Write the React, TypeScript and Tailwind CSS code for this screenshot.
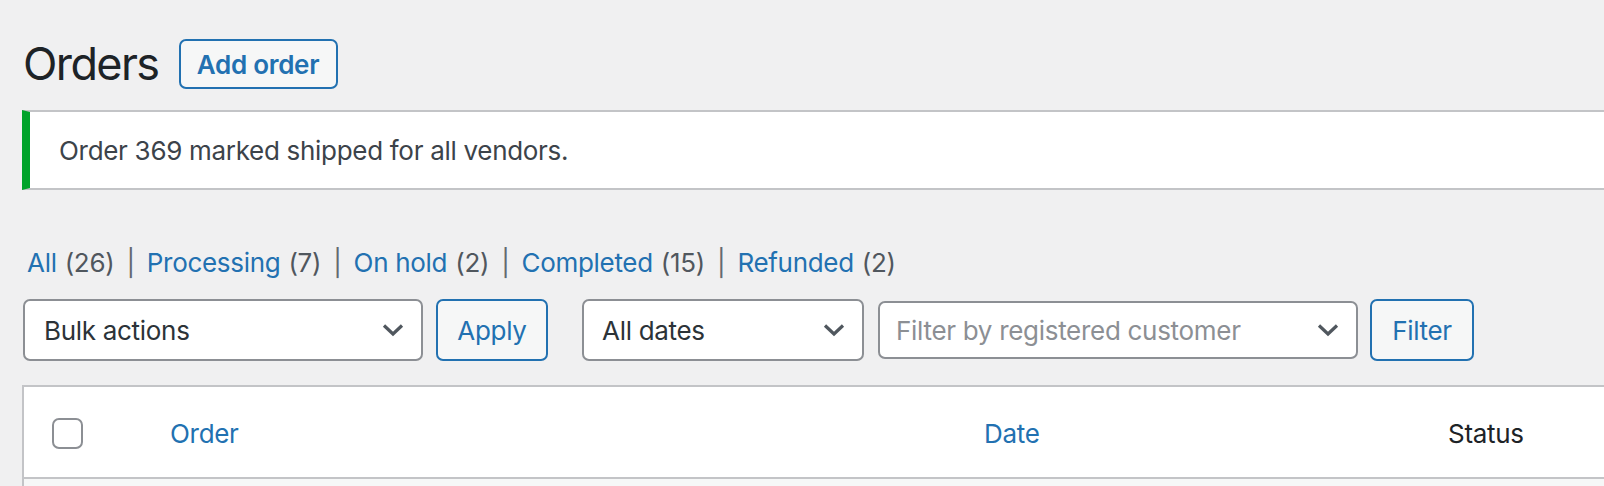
import { ReactNode } from 'react';

function Chevron() {
  return (
    <svg width="22" height="14" viewBox="0 0 22 14" className="shrink-0">
      <path d="M2 2.5 L11 11 L20 2.5" stroke="#50575e" strokeWidth="3.2" fill="none" />
    </svg>
  );
}

function Select({ className, children, muted }: { className: string; children: ReactNode; muted?: boolean }) {
  return (
    <div
      className={`flex items-center justify-between bg-white border-2 border-[#8c8f94] rounded-[7px] pr-[17px] ${className} ${
        muted ? 'text-[#8c8f94]' : 'text-[#2c3338]'
      }`}
    >
      <span>{children}</span>
      <Chevron />
    </div>
  );
}

function SecondaryButton({ className, children }: { className: string; children: ReactNode }) {
  return (
    <button className={`flex items-center justify-center bg-[#f6f7f7] border-2 border-[#2271b1] rounded-[7px] text-[#2271b1] ${className}`}>
      {children}
    </button>
  );
}

const views = [
  { label: 'All', count: 26 },
  { label: 'Processing', count: 7 },
  { label: 'On hold', count: 2 },
  { label: 'Completed', count: 15 },
  { label: 'Refunded', count: 2 },
];

export default function App() {
  return (
    <div className="min-h-screen bg-[#f0f0f1] pl-[22px] font-['Inter',sans-serif] text-[26px] tracking-[-0.3px] text-[#3c434a] overflow-hidden">
      {/* heading */}
      <div className="flex items-center gap-[20px] pt-[39px]">
        <h1 className="text-[45px] leading-[50px] tracking-[-1.6px] text-[#1d2327] font-normal pl-[1px]">Orders</h1>
        <SecondaryButton className="h-[50px] w-[159px] font-semibold text-[26px]">Add order</SecondaryButton>
      </div>

      {/* notice */}
      <div className="mt-[21px] h-[80px] flex items-center bg-white border-y-2 border-[#c3c4c7] border-l-[8px] border-l-[#00a32a] pl-[29px]">
        Order 369 marked shipped for all vendors.
      </div>

      {/* status filters */}
      <ul className="mt-[53px] flex items-center leading-[40px] pl-[5px] text-[#50575e]">
        {views.map((v, i) => (
          <li key={v.label} className="flex items-center">
            <a className="text-[#2271b1]">{v.label}</a>
            <span className="ml-[8px]">({v.count})</span>
            {i < views.length - 1 && <span className="mx-[12px] text-[#646970]">|</span>}
          </li>
        ))}
      </ul>

      {/* filters row */}
      <div className="mt-[16px] flex items-center">
        <Select className="ml-[1px] h-[62px] w-[400px] pl-[19px]">Bulk actions</Select>
        <SecondaryButton className="ml-[13px] h-[62px] w-[112px]">Apply</SecondaryButton>
        <Select className="ml-[34px] h-[62px] w-[282px] pl-[18px]">All dates</Select>
        <Select className="ml-[14px] h-[58px] w-[480px] pl-[16px]" muted>
          Filter by registered customer
        </Select>
        <SecondaryButton className="ml-[12px] h-[62px] w-[104px]">Filter</SecondaryButton>
      </div>

      {/* table */}
      <div className="mt-[24px] bg-white border-2 border-r-0 border-[#c3c4c7]">
        <div className="flex items-center h-[92px] pt-[3px] border-b-2 border-[#c3c4c7]">
          <div className="w-[146px] pl-[28px]">
            <div className="w-[31px] h-[31px] rounded-[7px] border-2 border-[#8c8f94] bg-white" />
          </div>
          <div className="w-[814px] text-[#2271b1]">Order</div>
          <div className="w-[464px] text-[#2271b1]">Date</div>
          <div className="text-[#1d2327]">Status</div>
        </div>
        <div className="h-[40px] bg-[#f6f7f7]" />
      </div>
    </div>
  );
}
